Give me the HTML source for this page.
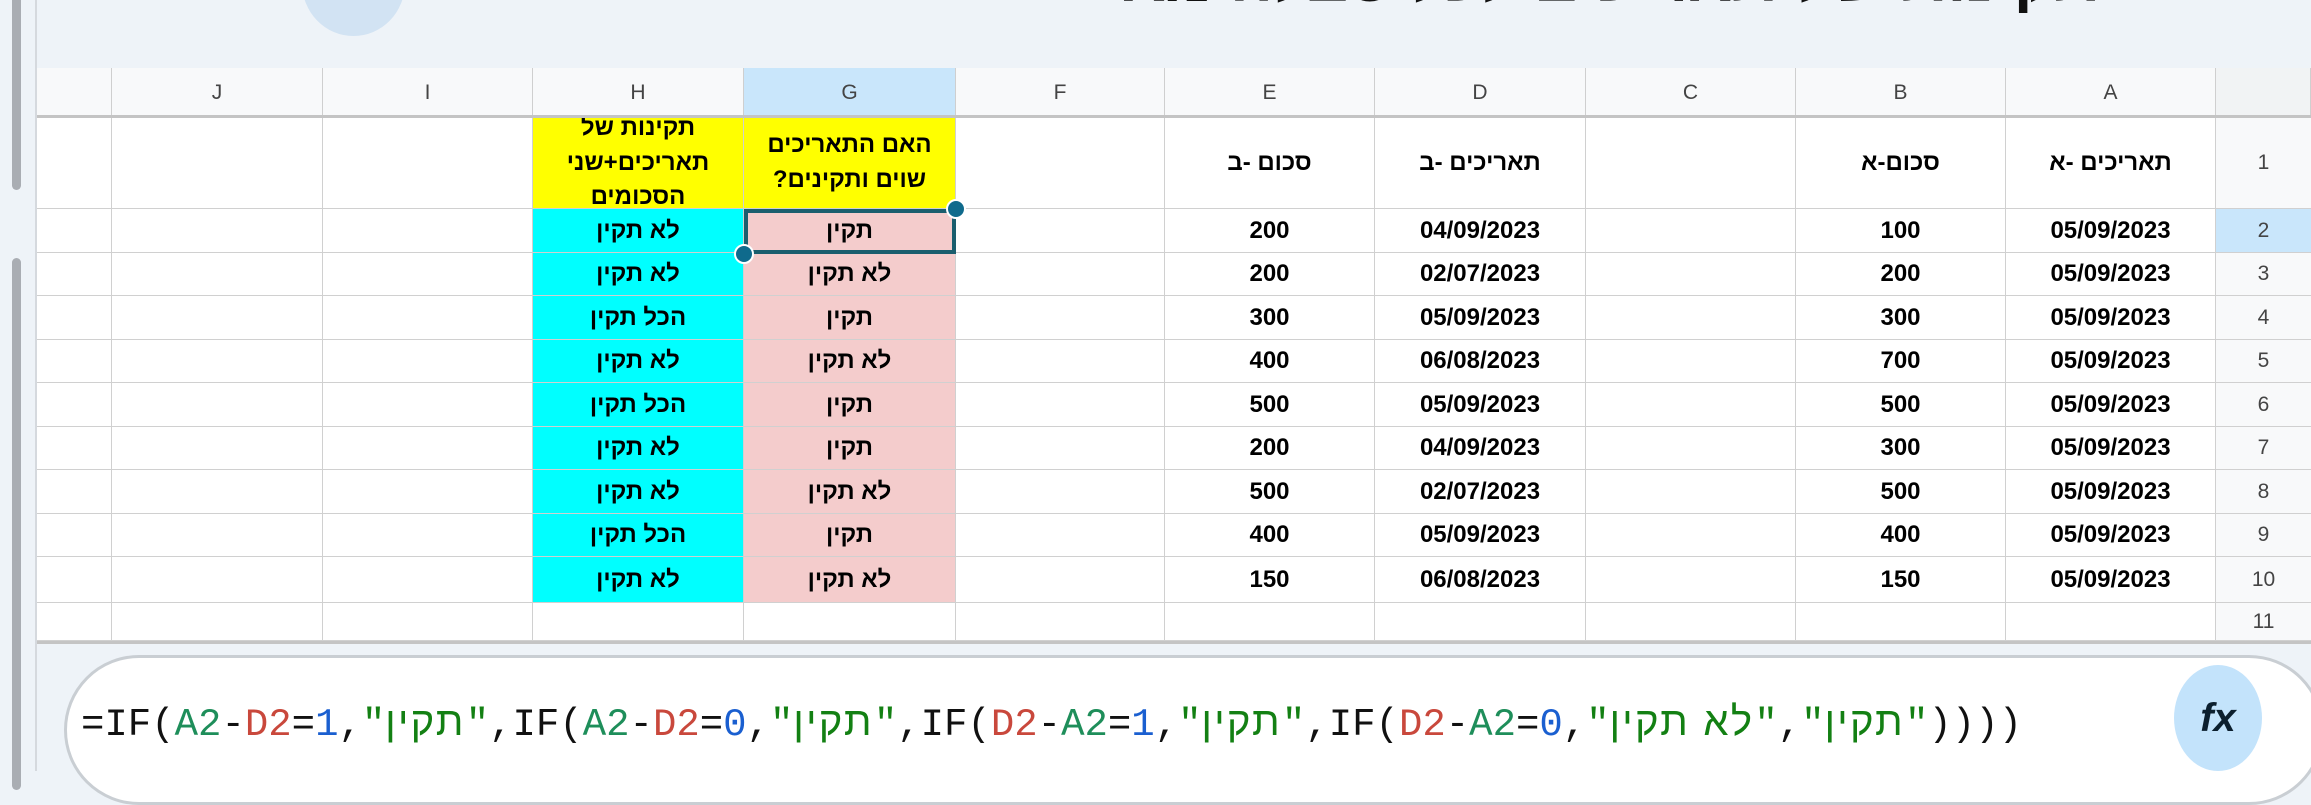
<!DOCTYPE html>
<html><head><meta charset="utf-8"><style>
*{margin:0;padding:0;box-sizing:border-box}
body{width:2311px;height:771px;overflow:hidden;background:#eef3f8;position:relative;font-family:"Liberation Sans","Noto Sans CJK SC",sans-serif}
.a{position:absolute}
.c{position:absolute;display:flex;align-items:center;justify-content:center;text-align:center;font-weight:bold;font-size:24px;color:#000;border-right:1px solid #d0d0d0;border-bottom:1px solid #d0d0d0;line-height:1.15;overflow:hidden}
.h{position:absolute;display:flex;align-items:center;justify-content:center;font-size:21px;color:#444;border-right:1px solid #cfcfcf;background:#f8f9fa;top:68px;height:49px}
.rn{position:absolute;left:2216px;width:95px;display:flex;align-items:center;justify-content:center;font-size:21px;color:#444;border-bottom:1px solid #d0d0d0;background:#f8f9fa}
.f{font-family:"Liberation Mono","DejaVu Sans Mono",monospace;font-size:39px;color:#111;white-space:pre}
.f bdi{font-family:"Liberation Sans","DejaVu Sans",sans-serif;font-size:40px;letter-spacing:2.3px}
.g{color:#1e8e5a}.r{color:#c9483c}.b{color:#1a5fd0}.s{color:#138013}
</style></head><body>
<div class="a" style="left:302px;top:-70px;width:103px;height:106px;border-radius:50%;background:#d2e3f3"></div>
<div class="a" style="left:1120px;top:-58px;width:980px;font-size:64px;font-weight:bold;white-space:nowrap;overflow:hidden;direction:rtl;color:#111">תקינות של תאריכים לכל טבלה מאוחדת</div>
<div class="a" style="left:37px;top:68px;width:2274px;height:575px;background:#fff"></div>
<div class="h" style="left:37px;width:75px"></div>
<div class="h" style="left:112px;width:211px">J</div>
<div class="h" style="left:323px;width:210px">I</div>
<div class="h" style="left:533px;width:211px">H</div>
<div class="h" style="left:744px;width:212px;background:#c9e6fb">G</div>
<div class="h" style="left:956px;width:209px">F</div>
<div class="h" style="left:1165px;width:210px">E</div>
<div class="h" style="left:1375px;width:211px">D</div>
<div class="h" style="left:1586px;width:210px">C</div>
<div class="h" style="left:1796px;width:210px">B</div>
<div class="h" style="left:2006px;width:210px">A</div>
<div class="h" style="left:2216px;width:95px;background:#f1f3f4"></div>
<div class="a" style="left:37px;top:115px;width:2274px;height:3px;background:#c4c4c4"></div>
<div id="grid"></div>
<script>
const cols=[37,112,323,533,744,956,1165,1375,1586,1796,2006,2216];
const rows=[118,209,253,296,340,383,427,470,514,557,603,641];
const data={
1:{H:"תקינות של תאריכים+שני הסכומים",G:"האם התאריכים שוים ותקינים?",E:"סכום -ב",D:"תאריכים -ב",B:"סכום-א",A:"תאריכים -א"},
};
const G=["תקין","לא תקין","תקין","לא תקין","תקין","תקין","לא תקין","תקין","לא תקין"];
const H=["לא תקין","לא תקין","הכל תקין","לא תקין","הכל תקין","לא תקין","לא תקין","הכל תקין","לא תקין"];
const E=[200,200,300,400,500,200,500,400,150];
const D=["04/09/2023","02/07/2023","05/09/2023","06/08/2023","05/09/2023","04/09/2023","02/07/2023","05/09/2023","06/08/2023"];
const B=[100,200,300,700,500,300,500,400,150];
for(let i=0;i<9;i++)data[i+2]={H:H[i],G:G[i],E:E[i],D:D[i],B:B[i],A:"05/09/2023"};
const letters=["","J","I","H","G","F","E","D","C","B","A"];
let html="";
for(let r=1;r<=11;r++){
 const t=rows[r-1],hgt=rows[r]-rows[r-1];
 for(let c=0;c<11;c++){
  const L=letters[c];let bg="#fff";
  if(L=="H")bg=r==1?"#ffff00":(r<=10?"#00ffff":"#fff");
  if(L=="G")bg=r==1?"#ffff00":(r<=10?"#f4cccc":"#fff");
  const txt=(data[r]&&data[r][L]!==undefined)?data[r][L]:"";
  const pad=(r==1&&L=="H")?"padding:0 40px;line-height:1.45;":(r==1&&L=="G")?"padding:0 12px;line-height:1.45;":"";
  html+=`<div class="c" style="left:${cols[c]}px;top:${t}px;width:${cols[c+1]-cols[c]}px;height:${hgt}px;background:${bg};direction:rtl;${pad}"><div>${txt}</div></div>`;
 }
 html+=`<div class="rn" style="top:${t}px;height:${hgt}px;${r==2?'background:#c9e6fb;':''}">${r}</div>`;
}
document.getElementById("grid").innerHTML=html;
</script>
<div class="a" style="left:37px;top:641px;width:2274px;height:3px;background:#c4c4c4"></div>
<div class="a" style="left:744px;top:209px;width:212px;height:45px;border:4px solid #1b5e6e"></div>
<div class="a" style="left:946px;top:199px;width:20px;height:20px;border-radius:50%;background:#0f6a8c;border:2px solid #fff"></div>
<div class="a" style="left:734px;top:244px;width:20px;height:20px;border-radius:50%;background:#0f6a8c;border:2px solid #fff"></div>
<div class="a" style="left:0;top:0;width:37px;height:771px;background:#eef3f8;border-right:2px solid #d5d9de"></div>
<div class="a" style="left:12px;top:-10px;width:9px;height:200px;border-radius:5px;background:#a9adb3"></div>
<div class="a" style="left:12px;top:258px;width:9px;height:345px;border-radius:5px;background:#a9adb3"></div>
<div class="a" style="left:12px;top:560px;width:9px;height:230px;border-radius:5px;background:#a9adb3"></div>
<div class="a" style="left:64px;top:655px;width:2260px;height:150px;border-radius:75px;background:#fff;border:3px solid #c9ced3"></div>
<div class="a f" style="left:81px;top:700px;direction:ltr;unicode-bidi:isolate">=IF(<span class="g">A2</span>-<span class="r">D2</span>=<span class="b">1</span>,<span class="s">"<bdi>תקין</bdi>"</span>,IF(<span class="g">A2</span>-<span class="r">D2</span>=<span class="b">0</span>,<span class="s">"<bdi>תקין</bdi>"</span>,IF(<span class="r">D2</span>-<span class="g">A2</span>=<span class="b">1</span>,<span class="s">"<bdi>תקין</bdi>"</span>,IF(<span class="r">D2</span>-<span class="g">A2</span>=<span class="b">0</span>,<span class="s">"<bdi>לא תקין</bdi>"</span>,<span class="s">"<bdi>תקין</bdi>"</span>))))</div>
<div class="a" style="left:2174px;top:665px;width:88px;height:106px;border-radius:50%;background:#c3e3fb;display:flex;align-items:center;justify-content:center;font-family:'Liberation Sans',sans-serif;font-style:italic;font-weight:bold;font-size:40px;color:#0b1f2e">fx</div>
</body></html>
